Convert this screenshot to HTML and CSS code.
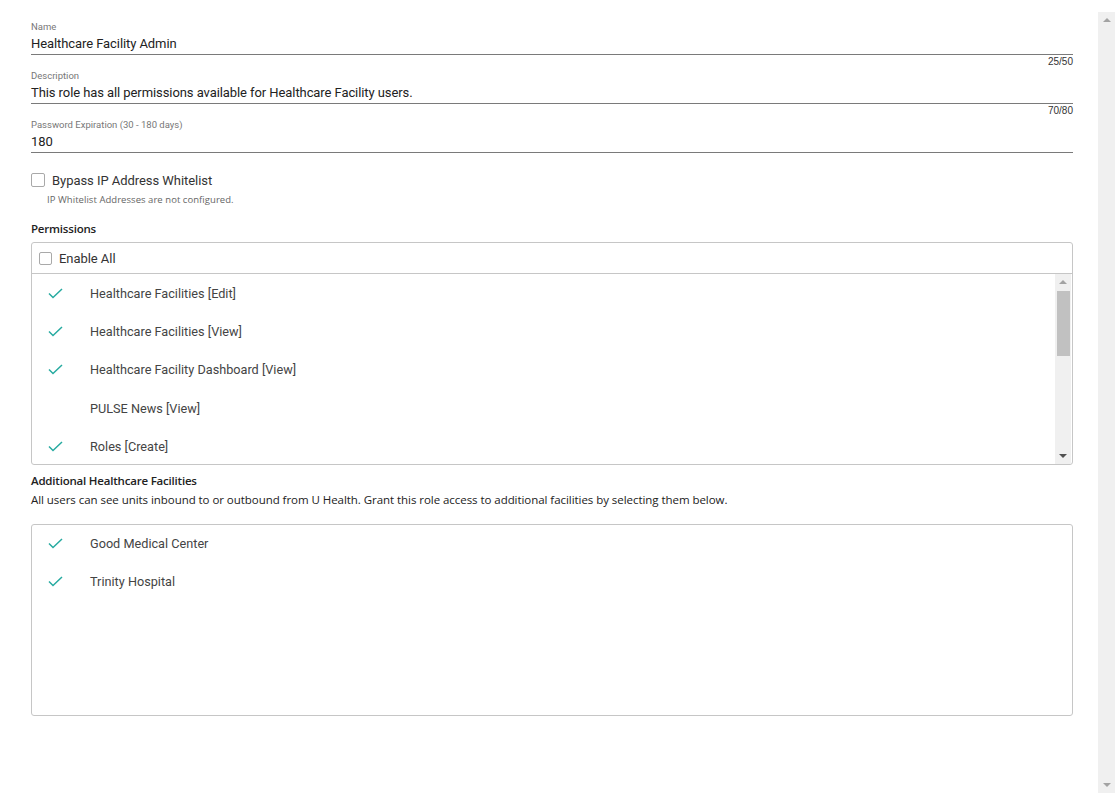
FILE: index.html
```html
<!DOCTYPE html>
<html>
<head>
<meta charset="utf-8">
<link rel="stylesheet" href="styles.css">
</head>
<body>
<div class="viewport">
  <div class="content">
    <div class="field">
      <div class="label">Name</div>
      <div class="value">Healthcare Facility Admin</div>
    </div>
    <div class="counter">25/50</div>
    <div class="field">
      <div class="label">Description</div>
      <div class="value">This role has all permissions available for Healthcare Facility users.</div>
    </div>
    <div class="counter">70/80</div>
    <div class="field">
      <div class="label">Password Expiration (30 - 180 days)</div>
      <div class="value">180</div>
    </div>

    <label class="check-row">
      <span class="box"></span>
      <span class="check-label">Bypass IP Address Whitelist</span>
    </label>
    <div class="hint">IP Whitelist Addresses are not configured.</div>

    <div class="section-title">Permissions</div>
    <div class="panel">
      <div class="panel-head">
        <span class="box small"></span>
        <span class="check-label">Enable All</span>
      </div>
      <div class="panel-body">
        <div class="items">
          <div class="item"><span class="tick"><svg width="15" height="11" viewBox="0 0 15 11"><path d="M1 5.5 L5 9.5 L14 1" fill="none" stroke="#26aaa0" stroke-width="1.5"/></svg></span><span>Healthcare Facilities [Edit]</span></div>
          <div class="item"><span class="tick"><svg width="15" height="11" viewBox="0 0 15 11"><path d="M1 5.5 L5 9.5 L14 1" fill="none" stroke="#26aaa0" stroke-width="1.5"/></svg></span><span>Healthcare Facilities [View]</span></div>
          <div class="item"><span class="tick"><svg width="15" height="11" viewBox="0 0 15 11"><path d="M1 5.5 L5 9.5 L14 1" fill="none" stroke="#26aaa0" stroke-width="1.5"/></svg></span><span>Healthcare Facility Dashboard [View]</span></div>
          <div class="item"><span class="tick"></span><span>PULSE News [View]</span></div>
          <div class="item"><span class="tick"><svg width="15" height="11" viewBox="0 0 15 11"><path d="M1 5.5 L5 9.5 L14 1" fill="none" stroke="#26aaa0" stroke-width="1.5"/></svg></span><span>Roles [Create]</span></div>
        </div>
        <div class="sbar inner">
          <span class="arrow up dim"></span>
          <span class="thumb"></span>
          <span class="spacer"></span>
          <span class="arrow down"></span>
        </div>
      </div>
    </div>

    <div class="section-title second">Additional Healthcare Facilities</div>
    <div class="section-desc">All users can see units inbound to or outbound from U Health. Grant this role access to additional facilities by selecting them below.</div>
    <div class="panel tall">
      <div class="items">
        <div class="item"><span class="tick"><svg width="15" height="11" viewBox="0 0 15 11"><path d="M1 5.5 L5 9.5 L14 1" fill="none" stroke="#26aaa0" stroke-width="1.5"/></svg></span><span>Good Medical Center</span></div>
        <div class="item"><span class="tick"><svg width="15" height="11" viewBox="0 0 15 11"><path d="M1 5.5 L5 9.5 L14 1" fill="none" stroke="#26aaa0" stroke-width="1.5"/></svg></span><span>Trinity Hospital</span></div>
      </div>
    </div>
  </div>
  <div class="sbar outer">
    <span class="arrow up dim"></span>
    <span class="spacer"></span>
    <span class="arrow down dim"></span>
  </div>
</div>
</body>
</html>
```

FILE: styles.css
```css
* { box-sizing: border-box; }
html, body { margin: 0; padding: 0; background: #fff; }
body { font-family: Roboto, "Liberation Sans", sans-serif; color: #212121; }

.viewport {
  display: flex;
  height: 781px;
  margin: 12px 5px 10px 0;
}
.content {
  flex: 1;
  padding: 8px 25px 0 31px;
}

.field { display: flex; flex-direction: column; }
.label {
  font-size: 9.5px;
  line-height: 12px;
  padding-top: 1px;
  color: #777;
}
.value {
  margin-top: 1px;
  font-size: 13px;
  line-height: 20px;
  color: #222;
  letter-spacing: -0.08px;
  border-bottom: 1px solid #7a7a7a;
}
.counter {
  text-align: right;
  font-family: "Liberation Sans", Arial, sans-serif;
  font-size: 10px;
  line-height: 14px;
  color: #333;
}

.check-row {
  display: flex;
  align-items: center;
  margin-top: 20px;
  height: 14px;
}
.box {
  width: 14px;
  height: 14px;
  border: 1.5px solid #a9a9a9;
  border-radius: 2px;
  background: #fff;
  flex: none;
}
.box.small { width: 13px; height: 13px; }
.check-label {
  margin-left: 7px;
  font-size: 13px;
  color: #333;
  letter-spacing: -0.05px;
}
.hint {
  margin: 7px 0 0 16px;
  font-family: "Open Sans", "Noto Sans", sans-serif;
  font-size: 9.5px;
  line-height: 12px;
  color: #666;
  letter-spacing: 0.05px;
}

.section-title {
  margin-top: 15px;
  font-family: "Open Sans", "Noto Sans", sans-serif;
  font-weight: 600;
  font-size: 11.5px;
  line-height: 16px;
  color: #222;
  letter-spacing: -0.2px;
}
.section-title.second { margin-top: 8px; }
.section-desc {
  margin-top: 3px;
  font-family: "Open Sans", "Noto Sans", sans-serif;
  font-size: 11.5px;
  line-height: 16px;
  color: #222;
  letter-spacing: -0.05px;
}

.panel {
  margin-top: 5px;
  border: 1px solid #c6c6c6;
  border-radius: 3px;
}
.panel.tall {
  margin-top: 16px;
  height: 192px;
}
.panel.tall .items { padding-top: 0; margin-top: -1px; }
.panel-head {
  display: flex;
  align-items: center;
  height: 31px;
  padding: 1px 0 0 7px;
  border-bottom: 1px solid #c6c6c6;
}
.panel-head .check-label { margin-left: 7px; }
.panel-body {
  display: flex;
  height: 190px;
}
.items {
  flex: 1;
  overflow: hidden;
}
.item {
  display: flex;
  align-items: center;
  height: 38.3px;
  font-size: 12.7px;
  color: #444;
}
.tick {
  width: 58px;
  padding-left: 16px;
  display: flex;
  align-items: center;
  flex: none;
}
.tick svg { display: block; }

.sbar {
  display: flex;
  flex-direction: column;
  align-items: center;
  background: #f0f0f0;
  flex: none;
}
.sbar.inner {
  width: 16px;
  margin-right: 1px;
}
.sbar.outer { width: 17px; }
.spacer { flex: 1; }
.arrow {
  width: 0;
  height: 0;
  border-left: 4px solid transparent;
  border-right: 4px solid transparent;
  margin: 6px 0;
}
.arrow.up { border-bottom: 4px solid #505050; }
.arrow.down { border-top: 4px solid #505050; }
.arrow.up.dim { border-bottom-color: #a3a3a3; }
.arrow.down.dim { border-top-color: #a3a3a3; }
.thumb {
  width: 13px;
  height: 65px;
  background: #c1c1c1;
  margin-top: 1px;
}
```
